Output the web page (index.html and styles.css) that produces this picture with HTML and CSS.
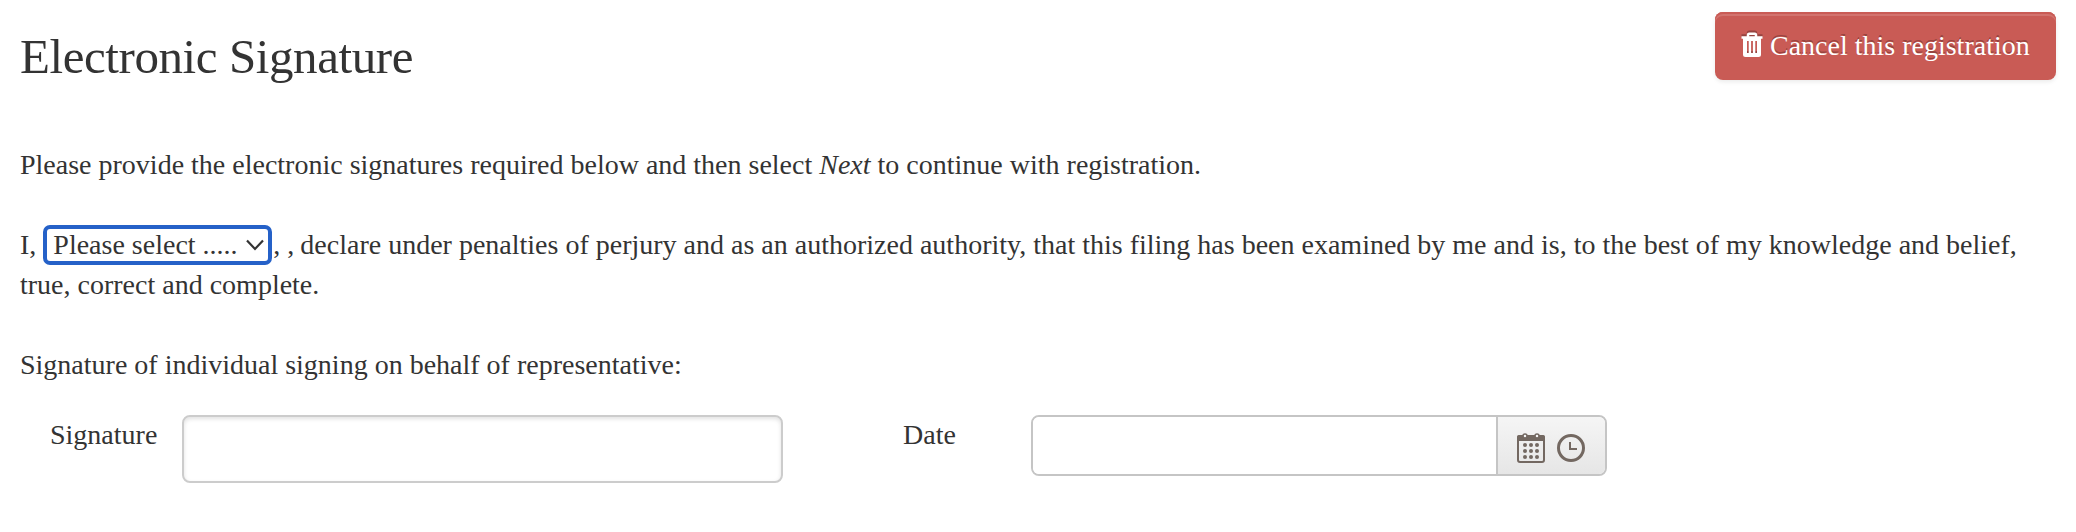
FILE: index.html
```html
<!DOCTYPE html>
<html lang="en">
<head>
  <meta charset="UTF-8">
  <meta name="viewport" content="width=device-width, initial-scale=1.0">
  <title>Electronic Signature</title>
  <link rel="stylesheet" href="styles.css">
</head>
<body>

  <div class="header">
    <h1>Electronic Signature</h1>
    <button type="button" class="btn-danger">
      <svg class="icon-trash" width="22" height="26" viewBox="0 0 22 26">
        <path class="lid" d="M0.500 5.500h21M7 5V3Q7 1.700 8.300 1.700h5.400Q15 1.700 15 3V5"/>
        <path class="can" fill-rule="evenodd" d="M2 6h18v16.500q0 2.500-2.500 2.500h-13Q2 25 2 22.500zM6 9v12h1.700V9zM10.100 9v12h1.800V9zM14.300 9v12H16V9z"/>
      </svg>
      <span>Cancel this registration</span>
    </button>
  </div>

  <p class="intro">Please provide the electronic signatures required below and then select <em>Next</em> to continue with registration.</p>

  <p class="declaration">I, <span class="select-box"><select>
      <option>Please select .....</option>
    </select><svg class="chevron" width="18" height="12" viewBox="0 0 18 12"><path d="M1 1.500l8 8.500 8-8.500"/></svg></span><span class="names">, , </span>declare under penalties of perjury and as an authorized authority, that this filing has been examined by me and is, to the best of my knowledge and belief, true, correct and complete.</p>

  <p class="behalf">Signature of individual signing on behalf of representative:</p>

  <div class="form-row">
    <label class="signature-label" for="signature">Signature</label>
    <input type="text" id="signature" class="signature">
    <label class="date-label" for="date">Date</label>
    <div class="datetime">
      <input type="text" id="date">
      <div class="pickers">
        <svg class="icon-calendar" width="28" height="30" viewBox="0 0 28 30">
          <rect x="1" y="3" width="26" height="26" rx="2"/>
          <path class="bar" d="M0 4q0-2 2-2h24q2 0 2 2v4H0z"/>
          <g class="rings"><circle cx="8" cy="3" r="2"/><circle cx="20" cy="3" r="2"/></g>
          <g class="days">
            <circle cx="8" cy="12" r="2"/><circle cx="14" cy="12" r="2"/><circle cx="20" cy="12" r="2"/>
            <circle cx="8" cy="18" r="2"/><circle cx="14" cy="18" r="2"/><circle cx="20" cy="18" r="2"/>
            <circle cx="8" cy="24" r="2"/><circle cx="14" cy="24" r="2"/><circle cx="20" cy="24" r="2"/>
          </g>
        </svg>
        <svg class="icon-clock" width="28" height="28" viewBox="0 0 28 28">
          <circle cx="14" cy="14" r="12.500"/>
          <path d="M13 8v7h7"/>
        </svg>
      </div>
    </div>
  </div>

</body>
</html>
```
FILE: styles.css
```css
* {
  box-sizing: border-box;
}

body {
  margin: 0;
  padding: 12px 20px;
  background-color: #fff;
  color: #333;
  font-family: "Liberation Serif", "Times New Roman", serif;
  font-size: 28px;
  line-height: 40px;
}

.header {
  display: flex;
  justify-content: space-between;
  align-items: flex-start;
  height: 133px;
}

h1 {
  margin: 5px 0 0;
  font-size: 49px;
  font-weight: normal;
  letter-spacing: -0.42px;
  line-height: 80px;
}

.btn-danger {
  display: flex;
  gap: 7px;
  width: 341px;
  height: 68px;
  padding: 14px 0 0 26px;
  border: none;
  border-radius: 8px;
  background-color: #c95b55;
  box-shadow: inset 0 2px 0 #c95b55, inset 0 4px 0 #d2736e, 0 2px 4px rgba(0, 0, 0, 0.08);
  color: #fff;
  font: inherit;
  line-height: 40px;
  text-shadow: 0 -2px 0 rgba(0, 0, 0, 0.25);
  white-space: nowrap;
}

.icon-trash {
  margin-top: 6px;
  fill: #fff;
  filter: drop-shadow(0 -2px 0 rgba(0, 0, 0, 0.25));
}

.icon-trash .lid {
  fill: none;
  stroke: #fff;
  stroke-width: 2.5;
}

p {
  margin: 0 0 40px;
}

.select-box {
  position: relative;
  display: inline-block;
  height: 40px;
  margin-right: 1px;
  vertical-align: top;
}

select {
  appearance: none;
  display: block;
  width: 229px;
  height: 40px;
  padding: 3px 0 3px 6px;
  border: 4px solid #2561c8;
  border-radius: 7px;
  outline: none;
  background-color: #fff;
  color: #333;
  font: inherit;
  line-height: 26px;
}

.chevron {
  position: absolute;
  top: 14px;
  right: 8px;
  fill: none;
  stroke: #333;
  stroke-width: 2.2;
}

.names {
  margin-right: -1px;
}

.behalf {
  margin-bottom: 30px;
}

.form-row {
  display: flex;
  align-items: flex-start;
  padding-left: 30px;
}

input {
  margin: 0;
  padding: 8px 12px;
  border: 2px solid #ccc;
  border-radius: 8px;
  outline: none;
  background-color: #fff;
  color: #333;
  font: inherit;
}

.signature-label {
  width: 132px;
}

.signature {
  width: 601px;
  height: 68px;
  box-shadow: inset 0 2px 4px rgba(0, 0, 0, 0.12);
}

.date-label {
  width: 128px;
  margin-left: 120px;
}

.datetime {
  display: flex;
  width: 576px;
  height: 61px;
  border: 2px solid #c5c5c5;
  border-radius: 8px;
  overflow: hidden;
}

.datetime input {
  flex: 1;
  border: none;
  border-radius: 0;
}

.pickers {
  display: flex;
  gap: 12px;
  width: 109px;
  padding: 16px 0 0 19px;
  border-left: 2px solid #c5c5c5;
  background: linear-gradient(#f5f5f5, #e6e6e6);
}

.icon-calendar rect {
  fill: none;
  stroke: #736861;
  stroke-width: 2;
}

.icon-calendar .bar,
.days {
  fill: #736861;
}

.rings {
  fill: #f3f3f3;
  stroke: #736861;
  stroke-width: 1.5;
}

.icon-clock {
  margin-top: 1px;
  fill: none;
  stroke: #736861;
  stroke-width: 3;
}

.icon-clock path {
  stroke-width: 2;
}
```
